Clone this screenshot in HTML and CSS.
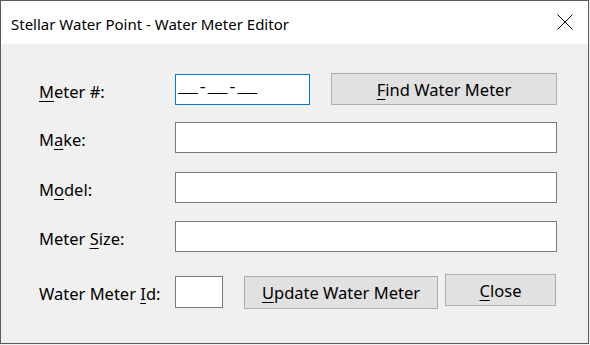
FILE: index.html
```html
<!DOCTYPE html>
<html lang="en">
  <head>
    <meta charset="utf-8" />
    <title>Water Meter Editor</title>
    <link rel="stylesheet" href="styles.css">
  </head>
  <body>
    <div class="window">
      <div class="titlebar">
        <span class="title">Stellar Water Point - Water Meter Editor</span>
        <svg class="close-x" width="16" height="16" viewBox="0 0 16 16">
          <path d="M0.5 0.5 L15.5 15.5 M15.5 0.5 L0.5 15.5" stroke="#000" stroke-width="1" fill="none" />
        </svg>
      </div>
      <div class="content">
        <div class="row row1">
          <label class="lbl"><u>M</u>eter #:</label>
          <div class="box box-meter focused">__-__-__</div>
          <button class="btn btn-find"><u>F</u>ind Water Meter</button>
        </div>
        <div class="row row2">
          <label class="lbl">M<u>a</u>ke:</label>
          <div class="box box-wide"></div>
        </div>
        <div class="row row3">
          <label class="lbl">M<u>o</u>del:</label>
          <div class="box box-wide"></div>
        </div>
        <div class="row row4">
          <label class="lbl">Meter <u>S</u>ize:</label>
          <div class="box box-wide"></div>
        </div>
        <div class="row row5">
          <label class="lbl">Water Meter <u>I</u>d:</label>
          <div class="box box-id"></div>
          <button class="btn btn-update"><u>U</u>pdate Water Meter</button>
          <button class="btn btn-close"><u>C</u>lose</button>
        </div>
      </div>
    </div>
  </body>
</html>
```

FILE: styles.css
```css
body {
  margin: 0;
  background-color: #f0f0f0;
  font-family: "Noto Sans", "Open Sans", sans-serif;
  color: #000;
}

u {
  text-decoration-thickness: 1px;
  text-underline-offset: 3px;
}

.window {
  width: 589px;
  height: 344px;
  box-sizing: border-box;
  border: 1px solid #5a5a5a;
  display: flex;
  flex-direction: column;
  background-color: #f0f0f0;
}

.titlebar {
  height: 43px;
  background-color: #fff;
  display: flex;
  align-items: center;
  justify-content: space-between;
  padding: 0 15px 0 10px;
}

.title {
  font-size: 15px;
  padding-top: 2px;
}

.close-x {
  margin-bottom: 2px;
}

.content {
  flex: 1;
  padding: 29px 0 0 38px;
}

.row {
  display: flex;
  align-items: center;
  height: 32px;
}

.row2 { margin-top: 16px; }
.row3 { margin-top: 18px; }
.row4 { margin-top: 17px; }
.row5 { margin-top: 22px; height: 35px; }

.lbl {
  width: 136px;
  font-size: 16.5px;
  padding-top: 4px;
  white-space: nowrap;
}

.box {
  height: 31px;
  box-sizing: border-box;
  border: 1px solid #7a7a7a;
  background-color: #fff;
}

.box-meter {
  width: 135px;
  font-family: "Liberation Mono", monospace;
  font-size: 16.5px;
  line-height: 22px;
  padding: 2px 0 0 2px;
}

.focused {
  border-color: #0078d7;
}

.box-wide {
  width: 382px;
}

.box-id {
  width: 48px;
  height: 32px;
}

.btn {
  height: 32px;
  box-sizing: border-box;
  border: 1px solid #adadad;
  background-color: #e1e1e1;
  font-family: inherit;
  font-size: 16.5px;
  color: #000;
  padding: 0;
}

.btn-find {
  width: 226px;
  margin-left: 21px;
}

.btn-update {
  width: 194px;
  margin-left: 21px;
  align-self: flex-end;
  height: 33px;
}

.btn-close {
  width: 111px;
  margin-left: 7px;
  align-self: flex-start;
}
```
